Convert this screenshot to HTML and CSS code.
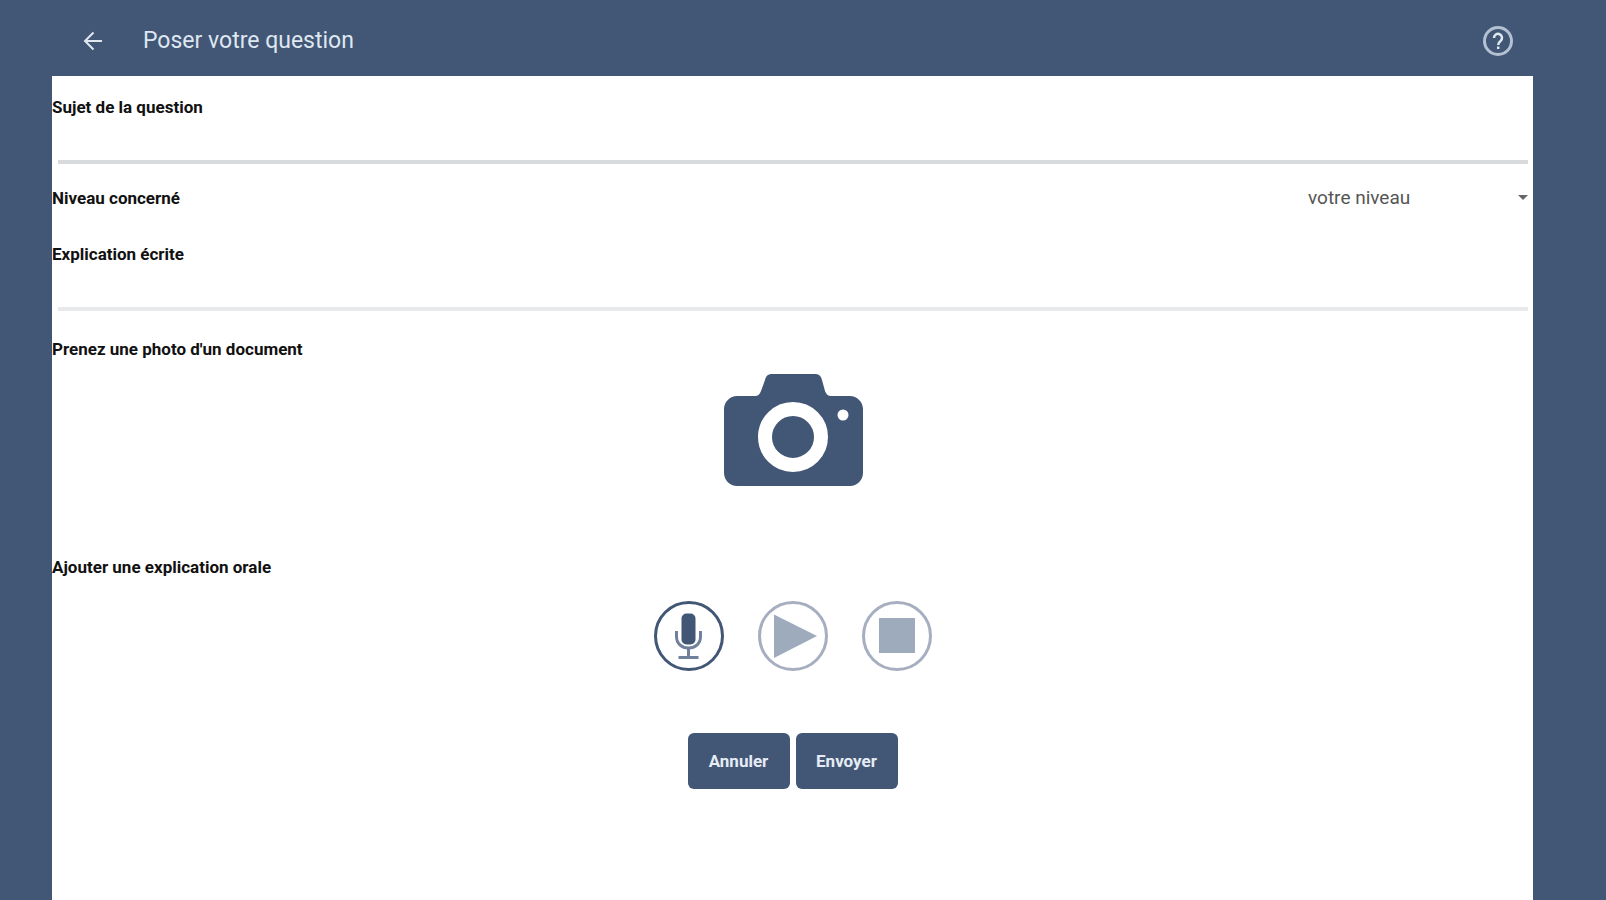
FILE: index.html
```html
<!DOCTYPE html>
<html lang="fr">
<head>
    <meta charset="UTF-8">
    <meta name="viewport" content="width=device-width, initial-scale=1.0">
    <title>Poser votre question</title>
    <link rel="stylesheet" href="styles.css">
</head>
<body>
    <header class="toolbar">
        <button type="button" class="icon-button" aria-label="Retour">
            <svg width="20" height="20" viewBox="0 0 20 20" fill="none" stroke="currentColor" stroke-width="2">
                <path d="M19 10H2M10.500 1.500L2 10l8.500 8.500"></path>
            </svg>
        </button>
        <h1 class="title">Poser votre question</h1>
        <button type="button" class="icon-button help" aria-label="Aide">
            <svg width="32" height="32" viewBox="0 0 32 32" fill="none" stroke="currentColor">
                <circle cx="16" cy="16" r="13.500" stroke-width="3"></circle>
                <path d="M12 13a4 4 0 1 1 6.500 3c-1.700 1.300-2.300 2-2.300 4" stroke="#dfe7f1" stroke-width="2.500"></path>
                <path d="M16.200 21.500v2.500" stroke="#dfe7f1" stroke-width="2.500"></path>
            </svg>
        </button>
    </header>

    <form class="form">
        <div class="field">
            <label for="subject">Sujet de la question</label>
            <input type="text" id="subject" class="line-input">
        </div>

        <div class="level">
            <label for="level">Niveau concerné</label>
            <div class="select-wrap">
                <select id="level">
                    <option>votre niveau</option>
                </select>
            </div>
        </div>

        <div class="field">
            <label for="explanation">Explication écrite</label>
            <textarea id="explanation" class="line-input light" rows="1"></textarea>
        </div>

        <section class="photo">
            <h2>Prenez une photo d'un document</h2>
            <button type="button" class="icon-button" aria-label="Prendre une photo">
                <svg width="140" height="112" viewBox="0 0 140 112">
                    <path fill="#425676" d="M14 22h18c3 0 5-2 6-5l4-11c1-4 3-6 7-6h43c4 0 6 2 7 6l3 11c1 3 3 5 6 5h19c7 0 13 6 13 13v64c0 7-6 13-13 13H14c-7 0-13-6-13-13V35c0-7 6-13 13-13z"></path>
                    <circle cx="70" cy="63" r="28" fill="#425676" stroke="#fff" stroke-width="14"></circle>
                    <circle cx="120" cy="41" r="5.500" fill="#fff"></circle>
                </svg>
            </button>
        </section>

        <section class="audio">
            <h2>Ajouter une explication orale</h2>
            <div class="recorder">
                <button type="button" class="icon-button round" aria-label="Enregistrer">
                    <svg width="70" height="70" viewBox="0 0 70 70" fill="none" stroke="currentColor">
                        <circle cx="35" cy="35" r="33.500" stroke-width="3"></circle>
                        <rect x="27.500" y="12.500" width="14" height="31" rx="5" fill="currentColor" stroke="none"></rect>
                        <path d="M22.500 30v5.500c0 7 5 11.500 12 11.500s12-4.500 12-11.500V30" stroke="#71819b" stroke-width="3"></path>
                        <path d="M34.500 47v9M24.500 56.500h20" stroke="#71819b" stroke-width="3"></path>
                    </svg>
                </button>
                <button type="button" class="icon-button round" aria-label="Écouter" disabled>
                    <svg width="70" height="70" viewBox="0 0 70 70">
                        <circle cx="35" cy="35" r="33.500" fill="none" stroke="#a6aec0" stroke-width="3"></circle>
                        <path d="M16 13.500L59 35 16 57z" fill="currentColor"></path>
                    </svg>
                </button>
                <button type="button" class="icon-button round" aria-label="Arrêter" disabled>
                    <svg width="70" height="70" viewBox="0 0 70 70">
                        <circle cx="35" cy="35" r="33.500" fill="none" stroke="#a6aec0" stroke-width="3"></circle>
                        <rect x="17" y="17" width="36" height="35" fill="currentColor"></rect>
                    </svg>
                </button>
            </div>
        </section>

        <div class="actions">
            <button type="reset">Annuler</button>
            <button type="submit">Envoyer</button>
        </div>
    </form>
</body>
</html>
```

FILE: styles.css
```css
* {
    box-sizing: border-box;
}
body {
    margin: 0;
    padding: 0 73px 0 52px;
    min-height: 100vh;
    display: flex;
    flex-direction: column;
    background-color: #425676;
    font-family: Roboto, sans-serif;
    color: #111;
}
button, input, select, textarea {
    font: inherit;
}
.toolbar {
    display: flex;
    align-items: center;
    height: 76px;
    padding: 6px 19px 0 31px;
    color: #dfe7f1;
}
.title {
    flex: 1;
    margin: 0 0 0 40px;
    font-size: 23px;
    line-height: 32px;
    font-weight: 400;
}
.icon-button {
    display: flex;
    padding: 0;
    border: none;
    background: none;
    color: inherit;
    cursor: pointer;
}
.help {
    color: #b4c1d3;
}
.form {
    flex: 1;
    padding: 19px 0;
    background-color: #fff;
}
label, h2 {
    display: block;
    margin: 0;
    font-size: 17px;
    line-height: 24px;
    font-weight: 700;
}
.field {
    padding-right: 5px;
}
.line-input {
    display: block;
    width: calc(100% - 6px);
    height: 45px;
    margin-left: 6px;
    padding: 8px 0;
    border: none;
    border-bottom: 4px solid #d9dadb;
    border-radius: 0;
    background: none;
    outline: none;
    resize: none;
}
.line-input.light {
    border-bottom-color: #e8e9ea;
}
.level {
    display: flex;
    justify-content: space-between;
    align-items: center;
    margin: 22px 0 32px;
}
.select-wrap {
    position: relative;
    width: 225px;
}
/* small caret at the end of the drop-down */
.select-wrap::after {
    content: "";
    position: absolute;
    top: 9px;
    right: 5px;
    border: 5px solid transparent;
    border-top-color: #666;
    border-bottom: none;
    pointer-events: none;
}
select {
    display: block;
    width: 100%;
    height: 24px;
    padding: 0;
    border: none;
    background: none;
    color: #555;
    font-size: 19px;
    line-height: 24px;
    appearance: none;
}
.photo {
    margin-top: 26px;
}
.photo .icon-button {
    margin: 13px auto 0;
}
.audio {
    margin-top: 69px;
}
.recorder {
    display: flex;
    justify-content: center;
    gap: 34px;
    margin-top: 22px;
}
.round {
    border-radius: 50%;
    color: #425676;
}
.round:disabled {
    color: #9dabbd;
    cursor: default;
}
.actions {
    display: flex;
    justify-content: center;
    gap: 6px;
    margin-top: 62px;
}
.actions button {
    width: 102px;
    height: 56px;
    padding: 0;
    border: none;
    border-radius: 6px;
    background-color: #425676;
    color: #e6ecf4;
    font-size: 17px;
    font-weight: 700;
    cursor: pointer;
}
```
